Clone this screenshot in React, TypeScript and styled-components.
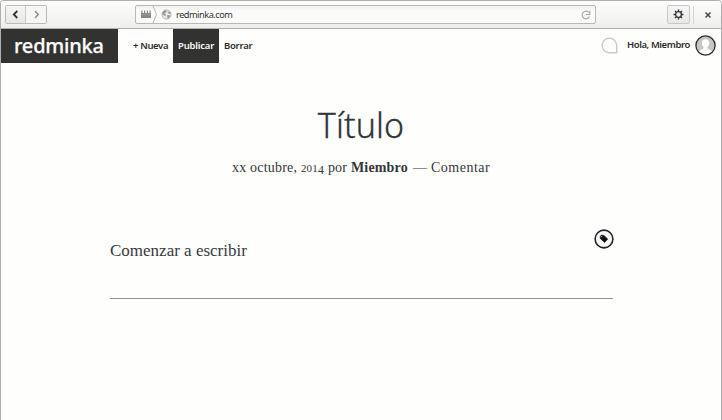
import React from "react";
import styled, { createGlobalStyle } from "styled-components";

const Global = createGlobalStyle`
  * { box-sizing: border-box; }
  html, body, #root { height: 100%; margin: 0; }
  body { background: #fefefd; overflow: hidden; }
`;

const Window = styled.div`
  width: 722px;
  height: 420px;
  background: #fefefd;
  border: 1px solid #b0b0b0;
  border-bottom: 0;
  border-radius: 4px 4px 0 0;
  overflow: hidden;
  font-family: "Noto Sans", "Open Sans", sans-serif;
  color: #2e2e2e;
`;

const Toolbar = styled.header`
  display: flex;
  align-items: center;
  height: 28px;
  padding: 0 4px;
  background: linear-gradient(#fdfdfc, #eeefed);
  border-bottom: 1px solid #b0b1b0;
`;

const ButtonGroup = styled.div`
  display: flex;
  width: 42px;
  height: 19px;
  border: 1px solid #b9bab9;
  border-radius: 2px;
  overflow: hidden;
`;

const ToolButton = styled.button<{ $framed?: boolean; $muted?: boolean }>`
  display: flex;
  align-items: center;
  justify-content: center;
  width: ${(p) => (p.$framed ? "23px" : "20px")};
  height: ${(p) => (p.$framed ? "19px" : "17px")};
  padding: 0;
  border: ${(p) => (p.$framed ? "1px solid #c9cac8" : "0")};
  border-right: ${(p) => (p.$muted ? "0" : "1px solid #c9cac8")};
  border-radius: ${(p) => (p.$framed ? "2px" : "0")};
  background: ${(p) => (p.$muted ? "#f6f7f5" : "linear-gradient(#f6f6f5, #e8e9e7)")};
  color: ${(p) => (p.$muted ? "#858a8c" : "#2e3436")};
`;

const CloseButton = styled.button`
  display: flex;
  padding: 0;
  border: 0;
  background: none;
`;

const AddressBar = styled.div`
  display: flex;
  align-items: center;
  width: 461px;
  height: 19px;
  margin-left: 88px;
  padding: 0 4px 0 5px;
  border: 1px solid #b7b8b7;
  border-radius: 2px;
  background: linear-gradient(#f1f2f0, #fbfbfa 5px);
`;

const Address = styled.span`
  flex: 1;
  margin-left: 4px;
  font: 9.2px/17px "Noto Sans", sans-serif;
  letter-spacing: -0.48px;
  color: #303436;
`;

const ToolEnd = styled.div`
  display: flex;
  align-items: center;
  margin-left: auto;
  padding-right: 5px;
`;

const Separator = styled.i`
  width: 1px;
  height: 18px;
  margin: 0 10px 0 3px;
  background: #d2d3d2;
`;

const SiteBar = styled.nav`
  display: flex;
  align-items: center;
  height: 34px;
`;

const Brand = styled.div`
  width: 117px;
  height: 34px;
  padding-left: 13px;
  background: #323231;
  color: #fdfdfc;
  font-size: 20px;
  font-weight: 500;
  line-height: 34px;
  letter-spacing: -0.2px;
  white-space: nowrap;
  -webkit-text-stroke: 0.25px #fdfdfc;
`;

const NavItem = styled.a<{ $width: number; $active?: boolean; $tracking: number }>`
  width: ${(p) => p.$width}px;
  height: 34px;
  padding-left: 5px;
  background: ${(p) => (p.$active ? "#323231" : "transparent")};
  color: ${(p) => (p.$active ? "#fafafa" : "#2c2c2c")};
  font-size: 9.5px;
  font-weight: 600;
  line-height: 34px;
  letter-spacing: ${(p) => p.$tracking}px;
  white-space: nowrap;
`;

const NavLinks = styled.div`
  display: flex;
  margin-left: 10px;
`;

const Account = styled.div`
  display: flex;
  align-items: center;
  height: 32px;
  align-self: flex-start;
  margin-left: auto;
  padding-right: 5px;
`;

const Greeting = styled.span`
  width: 68px;
  margin-left: 9px;
  font-size: 9.5px;
  font-weight: 600;
  line-height: 34px;
  letter-spacing: -0.42px;
  white-space: nowrap;
`;

const Article = styled.main`
  width: 504px;
  margin: 0 0 0 108px;
  padding-top: 38px;
  font-family: "Liberation Serif", serif;
`;

const Title = styled.h1`
  height: 48px;
  margin: 0;
  color: #30353a;
  font: 300 34px/48px "Noto Sans", "Open Sans", sans-serif;
  letter-spacing: 0.1px;
  text-align: center;
  -webkit-text-stroke: 0.3px #30353a;
`;

const Meta = styled.div`
  display: flex;
  height: 20px;
  margin: 9px 0 0 123px;
  color: #343638;
  font-size: 14px;
  line-height: 20px;
  white-space: nowrap;
`;

const MetaPart = styled.span<{ $width: number; $tracking: number; $bold?: boolean }>`
  width: ${(p) => p.$width}px;
  font-weight: ${(p) => (p.$bold ? 700 : 400)};
  letter-spacing: ${(p) => p.$tracking}px;
`;

const Figures = styled.span`
  font-size: 11px;
`;

const LowFigure = styled.span`
  position: relative;
  top: 2px;
  font-size: 12px;
`;

const Editor = styled.section`
  display: flex;
  justify-content: space-between;
  align-items: flex-start;
  height: 71px;
  margin: 50px 0 0 1px;
  border-bottom: 1px solid #929292;
`;

const Prompt = styled.p`
  margin: 11px 0 0;
  color: #36393c;
  font-size: 17px;
  line-height: 24px;
  letter-spacing: 0;
  white-space: nowrap;
`;

const TagButton = styled.button`
  display: flex;
  align-items: center;
  justify-content: center;
  width: 20px;
  height: 20px;
  margin: 1px -0.5px 0 0;
  padding: 0;
  border: 0;
  background: none;
`;

const Chevron = ({ right }: { right?: boolean }) => (
  <svg width="9" height="9" viewBox="0 0 9 9" fill="none" stroke="currentColor" strokeWidth={right ? 1.3 : 1.8}>
    <path d={right ? "M3 1 6.3 4.5 3 8" : "M6.3 1 2.8 4.5 6.3 8"} />
  </svg>
);

const SiteMark = () => (
  <svg width="20" height="17" viewBox="0 0 20 17">
    <path d="M0 7h10v5H0z" fill="#858989" />
    <path d="M.9 4.5v2.5M3.6 4.5v2.5M6.4 4.5v2.5M9.1 4.5v2.5" stroke="#858989" strokeWidth="1.2" />
    <path d="M0 8.4h10" stroke="#a5a8a8" strokeWidth=".7" />
    <path d="M12 0 15.5 8.5 12 17" fill="none" stroke="#b3b6b6" strokeWidth="1" />
  </svg>
);

const Globe = () => (
  <svg width="11" height="11" viewBox="0 0 11 11">
    <circle cx="5.5" cy="5.5" r="4.6" fill="#e9ebeb" stroke="#a4a8a8" strokeWidth=".8" />
    <path d="M1.5 3.2 3.8 1.2 6 1.7 5 3.6 3.3 4.2 4.9 5.6 4.2 7.7 3.1 6.2 1.5 5.3zM6.7 3.2 8.8 2.5 9.7 4.6 7.6 4.8zM6 6.3 8.6 6 8.9 8 6.7 9.7z" fill="#929898" />
  </svg>
);

const Reload = () => (
  <svg width="10" height="10" viewBox="0 0 10 10" fill="none" stroke="#a8acac" strokeWidth="1.2">
    <path d="M7.8 2.4A3.8 3.8 0 1 0 8.5 6.5" />
    <path d="M8.8.7v3.8H5" />
  </svg>
);

const Gear = () => (
  <svg width="11" height="11" viewBox="0 0 11 11" fill="none" stroke="#2e3436">
    <circle cx="5.5" cy="5.5" r="2.9" strokeWidth="1.3" />
    <path d="M5.5.6v1.8M5.5 8.6v1.8M.6 5.5h1.8M8.6 5.5h1.8M2 2l1.3 1.3M7.7 7.7 9 9M2 9l1.3-1.3M7.7 3.3 9 2" strokeWidth="1.4" />
  </svg>
);

const Close = () => (
  <svg width="8" height="8" viewBox="0 0 8 8" stroke="#45494b" strokeWidth="1.5">
    <path d="m1.5 1.5 5 5m0-5-5 5" />
  </svg>
);

const Bubble = () => (
  <svg width="17" height="17" viewBox="0 0 17 17">
    <path d="M15.7 15.7H8.2A7.3 7.3 0 1 1 15.7 8.3z" fill="#fdfdfc" stroke="#c7c8c8" strokeWidth="1.4" />
  </svg>
);

const Avatar = () => (
  <svg width="21" height="21" viewBox="0 0 21 21">
    <defs>
      <clipPath id="face">
        <circle cx="10.5" cy="10.5" r="9.3" />
      </clipPath>
    </defs>
    <circle cx="10.5" cy="10.5" r="9.5" fill="#c5c6c6" />
    <path clipPath="url(#face)" d="M10.5 4.2c-2.5 0-3.9 1.6-3.7 4 .1 1.7.8 2.9 1.8 3.7v1.6c-.7 1-3.8 1.4-5.1 3.5V21h14v-4c-1.3-2.1-4.4-2.5-5.1-3.5v-1.6c1-.8 1.7-2 1.8-3.7.2-2.4-1.2-4-3.7-4z" fill="#fff" />
    <circle cx="10.5" cy="10.5" r="9.6" fill="none" stroke="#2c2c2c" strokeWidth="1.3" />
  </svg>
);

const Tag = () => (
  <svg width="20" height="20" viewBox="0 0 20 20">
    <circle cx="10" cy="10" r="8.9" fill="#f8faf9" stroke="#252525" strokeWidth="1.6" />
    <path d="M6.1 7.4 7.5 6.1 9.9 6.4 13.7 10.1 10.7 13.4 6.4 9.7z" fill="#111" stroke="#111" strokeWidth=".6" strokeLinejoin="round" />
    <circle cx="7.5" cy="7.6" r=".7" fill="#bbb" />
  </svg>
);

export default function App() {
  return (
    <>
      <Global />
      <Window>
        <Toolbar>
          <ButtonGroup>
            <ToolButton aria-label="Atrás"><Chevron /></ToolButton>
            <ToolButton $muted aria-label="Adelante"><Chevron right /></ToolButton>
          </ButtonGroup>
          <AddressBar>
            <SiteMark />
            <Globe />
            <Address>redminka.com</Address>
            <Reload />
          </AddressBar>
          <ToolEnd>
            <ToolButton $framed aria-label="Preferencias"><Gear /></ToolButton>
            <Separator />
            <CloseButton aria-label="Cerrar"><Close /></CloseButton>
          </ToolEnd>
        </Toolbar>
        <SiteBar>
          <Brand>redminka</Brand>
          <NavLinks>
            <NavItem $width={45} $tracking={-0.35}>+ Nueva</NavItem>
            <NavItem $width={46} $tracking={-0.2} $active>Publicar</NavItem>
            <NavItem $width={40} $tracking={-0.25}>Borrar</NavItem>
          </NavLinks>
          <Account>
            <Bubble />
            <Greeting>Hola, Miembro</Greeting>
            <Avatar />
          </Account>
        </SiteBar>
        <Article>
          <Title>Título</Title>
          <Meta>
            <MetaPart $width={119} $tracking={0.2}>
              xx octubre, <Figures>201</Figures><LowFigure>4</LowFigure> por
            </MetaPart>
            <MetaPart $width={62} $tracking={0.15} $bold>Miembro</MetaPart>
            <MetaPart $width={18} $tracking={0}>—</MetaPart>
            <MetaPart $width={60} $tracking={0.5}>Comentar</MetaPart>
          </Meta>
          <Editor>
            <Prompt>Comenzar a escribir</Prompt>
            <TagButton aria-label="Etiquetas"><Tag /></TagButton>
          </Editor>
        </Article>
      </Window>
    </>
  );
}
